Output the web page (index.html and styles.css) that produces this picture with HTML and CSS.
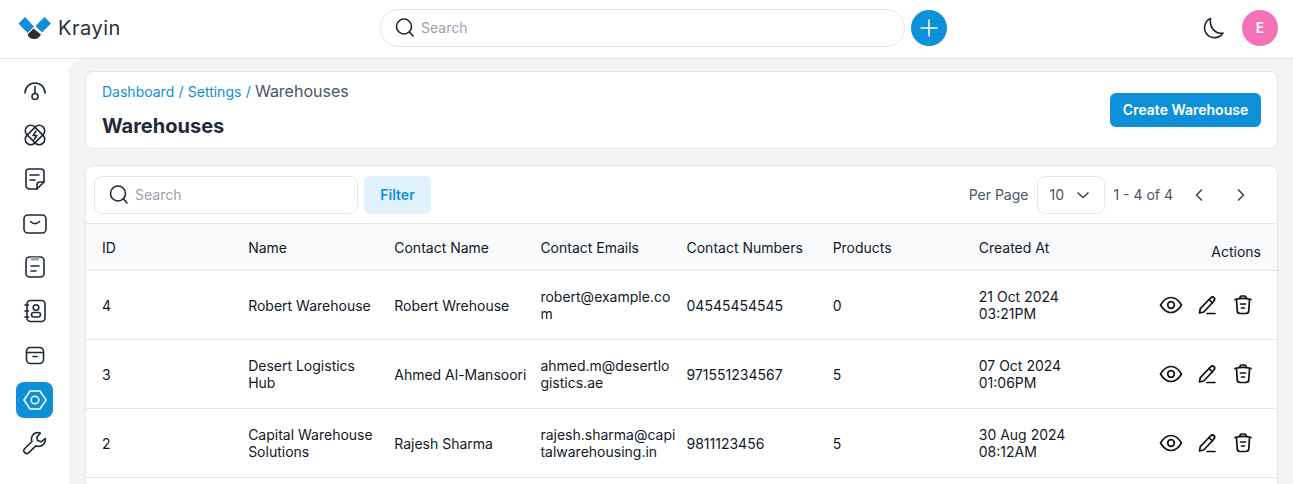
FILE: index.html
```html
<!DOCTYPE html>
<html>
<head>
  <meta charset="UTF-8">
  <title>Warehouses</title>
  <link rel="stylesheet" href="styles.css">
</head>
<body>
  <header class="topbar">
    <div class="logo">
      <svg class="logo-mark" width="34" height="24" viewBox="0 0 34 24">
        <path d="M0.500 7.500 L7 1 L16 10.500 L9.500 17 Z" fill="#0e90d9"/>
        <path d="M17.500 10 L26.500 1 L33 7.500 L24 16.500 Z" fill="#0e90d9"/>
        <path d="M15.500 12.500 L23 18.500 Q20 23.500 16 23 Q11.500 23 9.500 18.500 Z" fill="#263238"/>
      </svg>
      <span class="logo-text">Krayin</span>
    </div>
    <div class="top-search-wrap">
      <div class="top-search">
        <svg width="24" height="24" viewBox="0 0 24 24" class="ico"><circle cx="11" cy="10.500" r="7.500"/><path d="M16.500 16l3.500 4"/></svg>
        <span class="placeholder">Search</span>
      </div>
      <div class="quick-add">
        <svg width="22" height="22" viewBox="0 0 22 22" fill="none" stroke="#fff" stroke-width="1.500"><path d="M11 2.500v17M2.500 11h17"/></svg>
      </div>
    </div>
    <div class="top-right">
      <svg width="26" height="26" viewBox="0 0 26 26" class="ico"><path d="M10.500 3.500a10 10 0 1 0 12.500 14.500c-7 1.500-14-5-12.500-14.500z"/></svg>
      <div class="avatar">E</div>
    </div>
  </header>

  <div class="layout">
    <nav class="sidebar">
      <a class="nav-item"><svg width="24" height="24" viewBox="0 0 24 24" class="ico"><path d="M2 14a10 10 0 0 1 20 0"/><path d="M12 7.500v7"/><circle cx="12" cy="17.500" r="3"/></svg></a>
      <a class="nav-item"><svg width="24" height="24" viewBox="0 0 24 24" class="ico"><rect x="0.500" y="6.500" width="23" height="11" rx="5.500" transform="rotate(45 12 12)"/><rect x="0.500" y="6.500" width="23" height="11" rx="5.500" transform="rotate(-45 12 12)"/><path d="M13 8l-3 4.500h4l-3 4" stroke-width="1.500"/></svg></a>
      <a class="nav-item"><svg width="24" height="24" viewBox="0 0 24 24" class="ico"><path d="M14 22H6a3.500 3.500 0 0 1-3-3V5a3 3 0 0 1 3-3h12a3 3 0 0 1 3 3v10z"/><path d="M14 22v-4a3 3 0 0 1 3-3h4"/><path d="M7 8h9M7 13h5"/></svg></a>
      <a class="nav-item"><svg width="24" height="24" viewBox="0 0 24 24" class="ico"><rect x="1" y="4" width="22" height="18" rx="4"/><path d="M7.500 10.500c3 2.800 6 2.800 9 0"/></svg></a>
      <a class="nav-item"><svg width="24" height="24" viewBox="0 0 24 24" class="ico"><rect x="3" y="2" width="18" height="20" rx="3.500"/><path d="M8 2h8v2.500a1 1 0 0 1-1 1H9a1 1 0 0 1-1-1z" fill="#9ca3af" stroke="none"/><path d="M8 11h8M8 16h5"/></svg></a>
      <a class="nav-item"><svg width="24" height="24" viewBox="0 0 24 24" class="ico"><rect x="4" y="1.500" width="18" height="21" rx="3.500"/><circle cx="13" cy="8.500" r="2.800"/><rect x="8.500" y="13.500" width="9" height="4.500" rx="2.250"/><path d="M2 6h3.500M2 12h3.500M2 18h3.500"/></svg></a>
      <a class="nav-item"><svg width="24" height="24" viewBox="0 0 24 24" class="ico"><rect x="3.500" y="4.500" width="17" height="16" rx="4"/><path d="M3.500 9.500h17M10 13.500h4"/></svg></a>
      <a class="nav-item active"><svg width="24" height="24" viewBox="0 0 24 24" fill="none" stroke="#fff" stroke-width="1.500"><path d="M7 3h10l6 9-6 9H7l-6-9z" stroke-linejoin="round"/><circle cx="12" cy="12" r="3.800"/></svg></a>
      <a class="nav-item"><svg width="24" height="24" viewBox="0 0 24 24" class="ico"><path d="M15 1.500a6.500 6.500 0 0 0-6 9L1.800 17.500a2.800 2.800 0 0 0 4 4.200l7.400-7a6.500 6.500 0 0 0 9-7.200l-4 3.300-3.700-1.300-.7-3.500 3.700-3.800a6 6 0 0 0-2.500-.7z"/></svg></a>
    </nav>

    <main class="panel">
      <section class="card page-head">
        <div>
          <div class="crumbs"><span class="link">Dashboard</span> <span class="link">/</span> <span class="link">Settings</span> <span class="link">/</span> <span class="crumb-now">Warehouses</span></div>
          <h1>Warehouses</h1>
        </div>
        <button class="primary">Create Warehouse</button>
      </section>

      <section class="card datagrid">
        <div class="toolbar">
          <div class="toolbar-left">
            <div class="search">
              <svg width="24" height="24" viewBox="0 0 24 24" class="ico"><circle cx="11" cy="10.500" r="7.500"/><path d="M16.500 16l3.500 4"/></svg>
              <span class="placeholder">Search</span>
            </div>
            <button class="filter">Filter</button>
          </div>
          <div class="toolbar-right">
            <span>Per Page</span>
            <div class="select">10
              <svg width="14" height="14" viewBox="0 0 14 14" fill="none" stroke="#374151" stroke-width="1.500"><path d="M1.500 4.500l5.500 5 5.500-5"/></svg>
            </div>
            <span class="count">1 - 4 of 4</span>
            <svg class="pager prev" width="14" height="16" viewBox="0 0 14 16" fill="none" stroke="#374151" stroke-width="1.500"><path d="M10 2.500L4.500 8l5.500 5.500"/></svg>
            <svg class="pager" width="14" height="16" viewBox="0 0 14 16" fill="none" stroke="#374151" stroke-width="1.500"><path d="M4 2.500L9.500 8 4 13.500"/></svg>
          </div>
        </div>

        <div class="row head">
          <div>ID</div><div>Name</div><div>Contact Name</div><div>Contact Emails</div><div>Contact Numbers</div><div>Products</div><div>Created At</div>
          <div class="actions-title">Actions</div>
        </div>

        <div class="row">
          <div>4</div><div>Robert Warehouse</div><div>Robert Wrehouse</div><div class="mail">robert@example.com</div><div>04545454545</div><div>0</div><div>21 Oct 2024<br>03:21PM</div>
          <div class="actions">
            <svg width="24" height="24" viewBox="0 0 24 24" class="act"><path d="M1.500 12C4.500 7 8 4.500 12 4.500s7.500 2.500 10.500 7.500c-3 5-6.500 7.500-10.500 7.500S4.500 17 1.500 12z"/><circle cx="12" cy="12" r="3.300"/></svg>
            <svg width="24" height="24" viewBox="0 0 24 24" class="act"><path d="M4.500 20l.8-4.300L15.500 5c1.300-1.200 2.600-1.200 3.500-.3s.9 2.300-.3 3.500L8.800 19z"/><path d="M14 6.500l3.500 3.500M12 20.500h8"/></svg>
            <svg width="24" height="24" viewBox="0 0 24 24" class="act"><path d="M4 6.500c5-1.300 11-1.300 16 0M9 5.500V4.500A1.500 1.500 0 0 1 10.500 3h3A1.500 1.500 0 0 1 15 4.500v1"/><path d="M5.500 7l.7 10.500a3 3 0 0 0 3 3h5.600a3 3 0 0 0 3-3L18.500 7"/><path d="M9.500 11h5M10.500 15h3"/></svg>
          </div>
        </div>

        <div class="row">
          <div>3</div><div>Desert Logistics Hub</div><div>Ahmed Al-Mansoori</div><div class="mail">ahmed.m@desertlogistics.ae</div><div>971551234567</div><div>5</div><div>07 Oct 2024<br>01:06PM</div>
          <div class="actions">
            <svg width="24" height="24" viewBox="0 0 24 24" class="act"><path d="M1.500 12C4.500 7 8 4.500 12 4.500s7.500 2.500 10.500 7.500c-3 5-6.500 7.500-10.500 7.500S4.500 17 1.500 12z"/><circle cx="12" cy="12" r="3.300"/></svg>
            <svg width="24" height="24" viewBox="0 0 24 24" class="act"><path d="M4.500 20l.8-4.300L15.500 5c1.300-1.200 2.600-1.200 3.500-.3s.9 2.300-.3 3.500L8.800 19z"/><path d="M14 6.500l3.500 3.500M12 20.500h8"/></svg>
            <svg width="24" height="24" viewBox="0 0 24 24" class="act"><path d="M4 6.500c5-1.300 11-1.300 16 0M9 5.500V4.500A1.500 1.500 0 0 1 10.500 3h3A1.500 1.500 0 0 1 15 4.500v1"/><path d="M5.500 7l.7 10.500a3 3 0 0 0 3 3h5.600a3 3 0 0 0 3-3L18.500 7"/><path d="M9.500 11h5M10.500 15h3"/></svg>
          </div>
        </div>

        <div class="row">
          <div>2</div><div>Capital Warehouse Solutions</div><div>Rajesh Sharma</div><div class="mail">rajesh.sharma@capitalwarehousing.in</div><div>9811123456</div><div>5</div><div>30 Aug 2024<br>08:12AM</div>
          <div class="actions">
            <svg width="24" height="24" viewBox="0 0 24 24" class="act"><path d="M1.500 12C4.500 7 8 4.500 12 4.500s7.500 2.500 10.500 7.500c-3 5-6.500 7.500-10.500 7.500S4.500 17 1.500 12z"/><circle cx="12" cy="12" r="3.300"/></svg>
            <svg width="24" height="24" viewBox="0 0 24 24" class="act"><path d="M4.500 20l.8-4.300L15.500 5c1.300-1.200 2.600-1.200 3.500-.3s.9 2.300-.3 3.500L8.800 19z"/><path d="M14 6.500l3.500 3.500M12 20.500h8"/></svg>
            <svg width="24" height="24" viewBox="0 0 24 24" class="act"><path d="M4 6.500c5-1.300 11-1.300 16 0M9 5.500V4.500A1.500 1.500 0 0 1 10.500 3h3A1.500 1.500 0 0 1 15 4.500v1"/><path d="M5.500 7l.7 10.500a3 3 0 0 0 3 3h5.600a3 3 0 0 0 3-3L18.500 7"/><path d="M9.500 11h5M10.500 15h3"/></svg>
          </div>
        </div>
      </section>
    </main>
  </div>
</body>
</html>
```
FILE: styles.css
```css
* { box-sizing: border-box; }
html, body { height: 100%; }
body {
  margin: 0;
  overflow: hidden;
  background: #fff;
  color: #111827;
  font-family: Inter, "Liberation Sans", sans-serif;
  font-size: 14px;
  display: flex;
  flex-direction: column;
}

.ico { fill: none; stroke: #1f2937; stroke-width: 1.600; stroke-linecap: round; stroke-linejoin: round; flex: none; }
.act { fill: none; stroke: #111; stroke-width: 1.700; stroke-linecap: round; stroke-linejoin: round; }
.placeholder { color: #9ca3af; }

.topbar {
  height: 59px;
  flex: none;
  display: flex;
  align-items: center;
  padding: 0 15px 3px 18px;
  border-bottom: 1px solid #e5e7eb;
}
.logo { display: flex; align-items: center; gap: 6px; width: 362px; }
.logo-text { font-size: 20px; color: #263238; letter-spacing: 0.5px; }
.top-search-wrap { display: flex; align-items: center; gap: 6px; }
.top-search {
  width: 525px;
  height: 38px;
  display: flex;
  align-items: center;
  gap: 4px;
  padding-left: 12px;
  border: 1px solid #e5e7eb;
  border-radius: 19px;
}
.quick-add {
  width: 36px;
  height: 36px;
  border-radius: 50%;
  background: #0e90d9;
  display: flex;
  align-items: center;
  justify-content: center;
}
.top-right { margin-left: auto; display: flex; align-items: center; gap: 16px; }
.avatar {
  width: 36px;
  height: 36px;
  border-radius: 50%;
  background: #f472b6;
  color: #fff;
  font-weight: 600;
  display: flex;
  align-items: center;
  justify-content: center;
}

.layout { flex: 1; display: flex; min-height: 0; }
.sidebar {
  width: 69px;
  flex: none;
  padding: 15px 16px 0;
  display: flex;
  flex-direction: column;
  gap: 8px;
}
.nav-item {
  width: 37px;
  height: 36px;
  border-radius: 8px;
  display: flex;
  align-items: center;
  justify-content: center;
}
.nav-item svg { margin-top: -2px; }
.nav-item.active { background: #0e90d9; }
.nav-item.active svg { margin-top: 0; }

.panel {
  flex: 1;
  min-width: 0;
  padding: 12px 15px 0 16px;
  background: #f3f4f6;
  border-top-left-radius: 14px;
}
.card {
  background: #fff;
  border: 1px solid #e5e7eb;
  border-radius: 8px;
}
.page-head {
  height: 78px;
  display: flex;
  justify-content: space-between;
  align-items: center;
  padding: 0 16px;
}
.crumbs { font-size: 14px; line-height: 20px; margin-top: -2px; word-spacing: 0.3px; }
.link { color: #0e90d9; }
.crumb-now { color: #4b5563; font-size: 16px; }
h1 { margin: 12px 0 0; font-size: 20px; line-height: 24px; font-weight: 700; color: #1f2937; }
.primary {
  height: 34px;
  width: 151px;
  padding: 0 0 2px;
  border: 0;
  border-radius: 6px;
  background: #0e90d9;
  color: #fff;
  font: 600 14px Inter, "Liberation Sans", sans-serif;
}

.datagrid { margin-top: 16px; overflow: hidden; min-height: 340px; }
.toolbar {
  height: 57px;
  display: flex;
  align-items: center;
  justify-content: space-between;
  padding: 0 29px 0 8px;
  color: #4b5563;
}
.toolbar-left { display: flex; gap: 6px; }
.search {
  width: 264px;
  height: 38px;
  display: flex;
  align-items: center;
  gap: 4px;
  padding-left: 12px;
  border: 1px solid #e5e7eb;
  border-radius: 8px;
}
.filter {
  width: 67px;
  height: 38px;
  border: 0;
  border-radius: 6px;
  background: #e0f2fe;
  color: #0e90d9;
  font: 600 14px Inter, "Liberation Sans", sans-serif;
}
.toolbar-right { display: flex; align-items: center; }
.select {
  width: 68px;
  height: 38px;
  margin: 0 8px 0 9px;
  padding: 0 14px 0 11px;
  display: flex;
  align-items: center;
  justify-content: space-between;
  border: 1px solid #e5e7eb;
  border-radius: 8px;
}
.pager.prev { margin: 0 28px 0 19px; }

.row {
  display: grid;
  grid-template-columns: repeat(8, minmax(0, 1fr));
  column-gap: 10px;
  align-items: center;
  height: 69px;
  padding: 0 16px;
  border-top: 1px solid #e5e7eb;
  line-height: 17px;
}
.row.head { height: 47px; background: #f9fafb; }
.row:last-child { border-bottom: 1px solid #e5e7eb; height: 70px; }
.mail { word-break: break-all; }
.actions-title { text-align: right; padding-top: 8px; }
.actions { display: flex; justify-content: flex-end; }
.actions svg { margin: 0 6px; }
```
